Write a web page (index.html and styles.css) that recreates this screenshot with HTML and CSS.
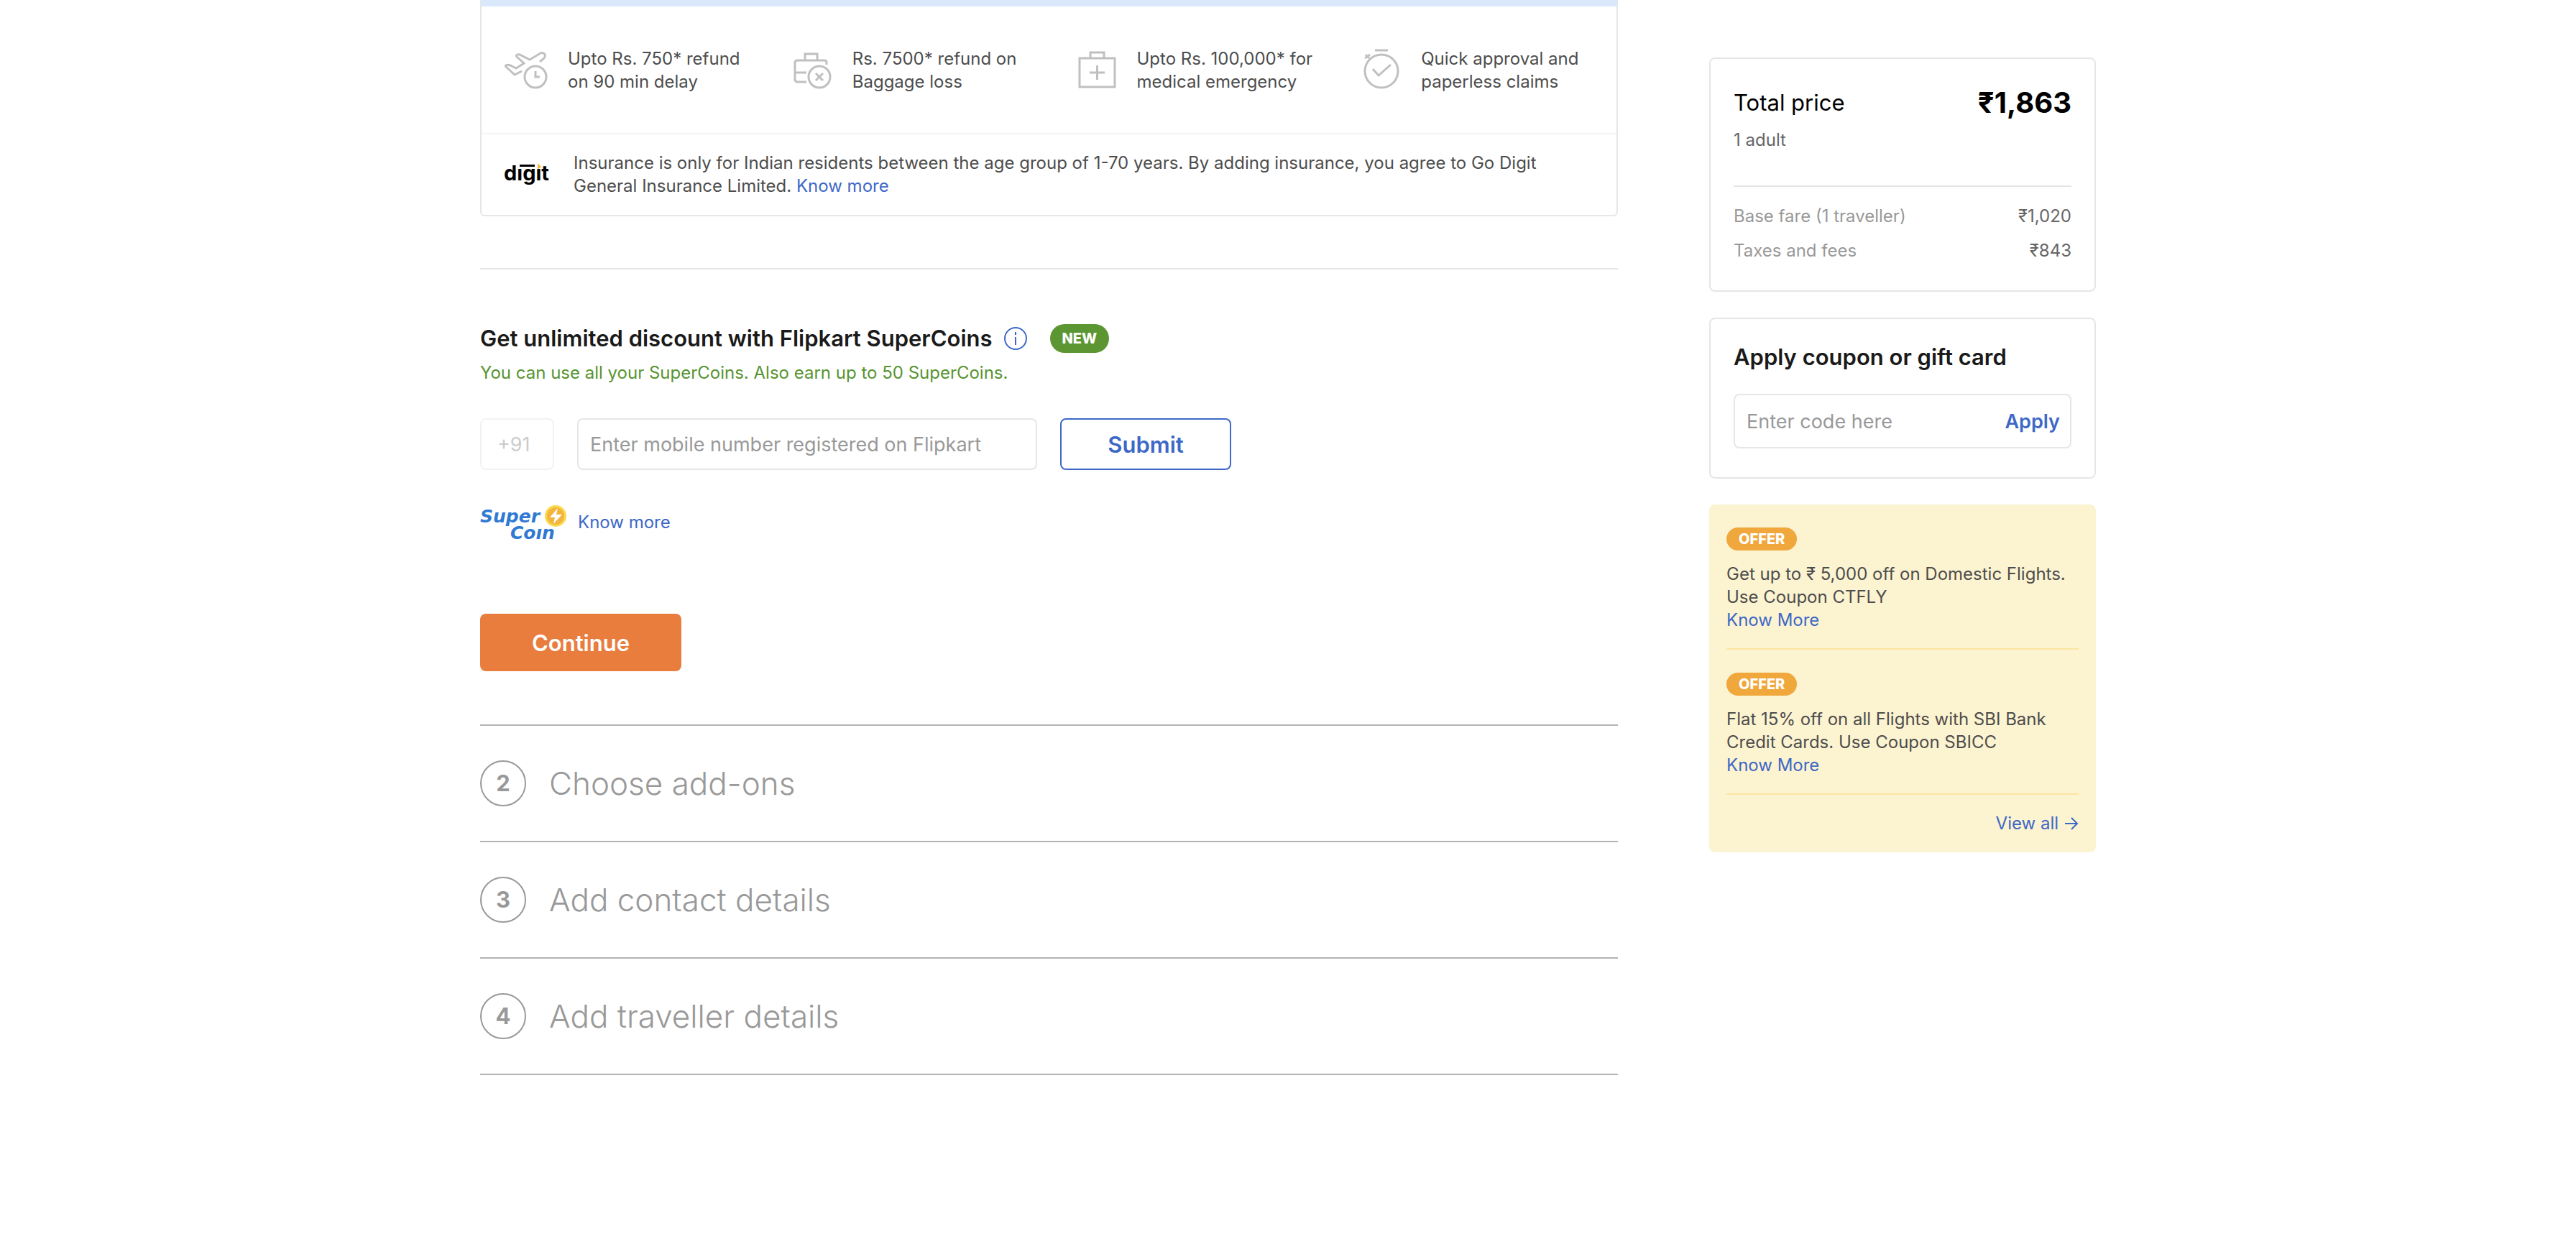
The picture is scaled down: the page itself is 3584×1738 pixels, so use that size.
FILE: index.html
```html
<!DOCTYPE html>
<html lang="en">
<head>
<meta charset="utf-8">
<meta name="viewport" content="width=device-width, initial-scale=1">
<title>Review your itinerary</title>
<link rel="stylesheet" href="styles.css">
</head>
<body>
<div class="page">
  <main class="main">
    <section class="insurance">
      <ul class="features">
        <li class="feature">
          <svg class="feature-icon" viewBox="0 0 64 64" aria-hidden="true">
            <path d="M49 20l5-4c5-5 1-10-4-8L35 17 21 10c-3-1-6 1-4 3l10 9-11 7-8-4c-3-1-6-1-7 1l13 12 10-5"/>
            <circle cx="43" cy="41" r="15"/>
            <path d="M43 33v8h6"/>
          </svg>
          <span>Upto Rs. 750* refund<br>on 90 min delay</span>
        </li>
        <li class="feature">
          <svg class="feature-icon" viewBox="0 0 64 64" aria-hidden="true">
            <path d="M24 48H12q-4 0-4-4V21q0-3 4-3h37q3 0 3 3v3M22 17V9h17v8M8 35h16"/>
            <circle cx="42" cy="41" r="15"/>
            <path d="M37 36l10 10M47 36 37 46"/>
          </svg>
          <span>Rs. 7500* refund on<br>Baggage loss</span>
        </li>
        <li class="feature">
          <svg class="feature-icon" viewBox="0 0 64 64" aria-hidden="true">
            <path d="M8 15h49v40H8zM23 15V7h19v8M32.500 25v20M22 35h21"/>
          </svg>
          <span>Upto Rs. 100,000* for<br>medical emergency</span>
        </li>
        <li class="feature">
          <svg class="feature-icon" viewBox="0 0 64 64" aria-hidden="true">
            <circle cx="33" cy="33" r="23"/>
            <path d="M24 4h18M10 15l7-5M11 10l5 5M21 30l8 9 17-15"/>
          </svg>
          <span>Quick approval and<br>paperless claims</span>
        </li>
      </ul>
      <div class="terms">
        <svg class="digit" viewBox="0 0 64 40" role="img" aria-label="digit">
          <text x="-1" y="28">dıgıt</text>
          <path d="M21 6h21v3H21z"/>
          <path class="digit-spark" d="M46 4l5 5-5 4z"/>
        </svg>
        <p>Insurance is only for Indian residents between the age group of 1-70 years. By adding insurance, you agree to Go Digit General Insurance Limited. <a href="#insurance">Know more</a></p>
      </div>
    </section>

    <section class="supercoins">
      <div class="supercoins-head">
        <h2>Get unlimited discount with Flipkart SuperCoins</h2>
        <svg class="info" viewBox="0 0 32 32" aria-hidden="true">
          <circle cx="16" cy="16" r="15"/>
          <path d="M16 14v11M16 7v4"/>
        </svg>
        <span class="badge badge-new">NEW</span>
      </div>
      <p class="supercoins-note">You can use all your SuperCoins. Also earn up to 50 SuperCoins.</p>
      <form class="mobile-form">
        <input class="field country" type="text" value="+91" aria-label="Country code" disabled>
        <input class="field mobile" type="tel" placeholder="Enter mobile number registered on Flipkart" aria-label="Mobile number">
        <button class="submit" type="button">Submit</button>
      </form>
      <div class="coin-row">
        <svg class="coin-logo" viewBox="0 0 120 50" role="img" aria-label="SuperCoin">
          <text x="0" y="25">Super</text>
          <text x="42" y="48">Coın</text>
          <circle class="coin-rim" cx="105" cy="16" r="15"/>
          <circle class="coin-face" cx="105" cy="16" r="12"/>
          <path class="coin-bolt" d="M108 5 97 18h7l-2 9 12-13h-8z"/>
        </svg>
        <a href="#supercoin">Know more</a>
      </div>
    </section>

    <button class="continue" type="button">Continue</button>

    <ol class="steps">
      <li class="step"><span class="step-number">2</span><h2>Choose add-ons</h2></li>
      <li class="step"><span class="step-number">3</span><h2>Add contact details</h2></li>
      <li class="step"><span class="step-number">4</span><h2>Add traveller details</h2></li>
    </ol>
  </main>

  <aside class="side">
    <section class="card price">
      <div class="price-row price-total"><span>Total price</span><strong>₹1,863</strong></div>
      <p class="price-pax">1 adult</p>
      <dl class="fares">
        <div class="price-row"><dt>Base fare (1 traveller)</dt><dd>₹1,020</dd></div>
        <div class="price-row"><dt>Taxes and fees</dt><dd>₹843</dd></div>
      </dl>
    </section>

    <section class="card coupon">
      <h3><label for="code">Apply coupon or gift card</label></h3>
      <div class="coupon-box">
        <input id="code" type="text" placeholder="Enter code here">
        <button type="button">Apply</button>
      </div>
    </section>

    <section class="offers">
      <article class="offer">
        <span class="badge badge-offer">OFFER</span>
        <p>Get up to ₹ 5,000 off on Domestic Flights. Use Coupon CTFLY<br><a href="#ctfly">Know More</a></p>
      </article>
      <article class="offer">
        <span class="badge badge-offer">OFFER</span>
        <p>Flat 15% off on all Flights with SBI Bank Credit Cards. Use Coupon SBICC<br><a href="#sbicc">Know More</a></p>
      </article>
      <a class="view-all" href="#offers">View all
        <svg viewBox="0 0 20 20" aria-hidden="true"><path d="M1 10h17M10 2l8 8-8 8"/></svg>
      </a>
    </section>
  </aside>
</div>
</body>
</html>
```
FILE: styles.css
```css
* { box-sizing: border-box; }

body {
  margin: 0;
  background: #fff;
  color: #4d4d4d;
  font: 400 24px/32px Inter, "Noto Sans", sans-serif;
}

h2, h3, p, ul, ol, dl, dd { margin: 0; padding: 0; }
ul, ol { list-style: none; }
a { color: #3e68c7; text-decoration: none; }
button, input { font-family: inherit; margin: 0; }
input::placeholder { color: #999; opacity: 1; }

.page {
  display: grid;
  grid-template-columns: minmax(0, 1fr) 538px;
  gap: 127px;
  max-width: 2248px;
  margin: 0 auto;
  padding-bottom: 240px;
}

/* Insurance card */
.insurance {
  border: 2px solid #e6e6e6;
  border-top: 9px solid #dae8fb;
  border-radius: 0 0 6px 6px;
}
.features {
  display: grid;
  grid-template-columns: repeat(4, 1fr);
  margin-right: -4px;
  padding: 57px 0 55px;
}
.feature {
  display: flex;
  gap: 24px;
  padding-left: 32px;
  white-space: nowrap;
}
.feature-icon {
  flex: none;
  width: 64px;
  height: 64px;
  fill: none;
  stroke: #c0c0c0;
  stroke-width: 3;
}
.terms {
  display: flex;
  align-items: center;
  gap: 32px;
  padding: 24px 96px 24px 32px;
  border-top: 2px solid #f4f4f4;
}
.digit { flex: none; width: 64px; height: 40px; overflow: visible; }
.digit text { font: 700 29px Inter, sans-serif; fill: #000; }
.digit-spark { fill: #f5b83d; }

/* SuperCoins */
.supercoins {
  margin-top: 72px;
  padding-top: 76px;
  border-top: 2px solid #e6e6e6;
}
.supercoins-head { display: flex; align-items: center; height: 40px; }
.supercoins-head h2 {
  color: #1a1a1a;
  font-size: 31px;
  font-weight: 600;
  line-height: 40px;
}
.info {
  width: 32px;
  height: 32px;
  margin: 0 32px 0 16px;
  fill: none;
  stroke: #3e68c7;
  stroke-width: 2;
}
.badge {
  display: block;
  width: max-content;
  padding: 0 17px;
  border-radius: 20px;
  color: #fff;
  font-size: 20px;
  font-weight: 800;
}
.badge-new { background: #5b9632; line-height: 40px; }
.badge-offer { background: #f0a73c; line-height: 32px; }
.supercoins-note { margin-top: 12px; color: #579430; }
.mobile-form { display: flex; gap: 32px; margin-top: 47px; }
.field {
  height: 72px;
  padding: 0 16px;
  border: 2px solid #e6e6e6;
  border-radius: 8px;
  background: #fff;
  font-size: 27px;
}
.country { width: 103px; padding: 0 22px; color: #999; opacity: .5; }
.mobile { width: 640px; }
.submit {
  width: 238px;
  border: 2px solid #3e68c7;
  border-radius: 8px;
  background: #fff;
  color: #3e68c7;
  font-size: 31px;
  font-weight: 600;
}
.coin-row { display: flex; align-items: center; gap: 16px; margin-top: 48px; }
.coin-logo { width: 120px; height: 50px; overflow: visible; }
.coin-logo text { font: italic 700 25px "DejaVu Sans", sans-serif; fill: #3079d2; }
.coin-rim { fill: #f9d94c; }
.coin-face { fill: #f3b53b; }
.coin-bolt { fill: #fff; }

.continue {
  display: block;
  width: 280px;
  height: 80px;
  margin-top: 102px;
  border: 0;
  border-radius: 8px;
  background: #e87d3e;
  color: #fff;
  font-size: 31px;
  font-weight: 600;
}

/* Upcoming steps */
.steps { margin-top: 74px; border-top: 2px solid #b3b3b3; }
.step {
  display: flex;
  align-items: center;
  gap: 32px;
  padding: 48px 0;
  border-bottom: 2px solid #b3b3b3;
  color: #999;
}
.step-number {
  width: 64px;
  height: 64px;
  border: 2px solid #999;
  border-radius: 50%;
  font-size: 31px;
  font-weight: 700;
  line-height: 60px;
  text-align: center;
}
.step h2 { font-size: 44px; font-weight: 300; line-height: 64px; }

/* Sidebar */
.side { display: flex; flex-direction: column; gap: 36px; padding-top: 80px; }
.card { border: 2px solid #e6e6e6; border-radius: 8px; }
.price { padding: 37px 32px 31px; }
.price-row { display: flex; justify-content: space-between; }
.price-total { color: #000; font-size: 31px; line-height: 48px; }
.price-total strong { font-size: 40px; font-weight: 700; }
.price-pax { margin-top: 12px; color: #666; }
.fares {
  margin-top: 47px;
  padding-top: 17px;
  border-top: 2px solid #e6e6e6;
  line-height: 48px;
}
.fares dt { color: #999; }
.fares dd { color: #666; }

.coupon { padding: 33px 32px 40px; }
.coupon h3 { color: #1a1a1a; font-size: 31px; font-weight: 600; line-height: 40px; }
.coupon-box {
  display: flex;
  height: 76px;
  margin-top: 31px;
  padding: 0 14px;
  border: 2px solid #e6e6e6;
  border-radius: 8px;
}
.coupon-box input { flex: 1; min-width: 0; padding: 0 2px; border: 0; background: none; font-size: 27px; }
.coupon-box button { padding: 0; border: 0; background: none; color: #3e68c7; font-size: 27px; font-weight: 600; }

.offers { padding: 0 24px 24px; border-radius: 8px; background: #fcf3d0; }
.offer { padding: 32px 0 23px; border-bottom: 2px solid #fbe5a1; }
.offer p { margin-top: 17px; }
.view-all { display: flex; justify-content: flex-end; align-items: center; gap: 8px; margin-top: 24px; }
.view-all svg { width: 20px; height: 20px; fill: none; stroke: #3e68c7; stroke-width: 2; }
```
